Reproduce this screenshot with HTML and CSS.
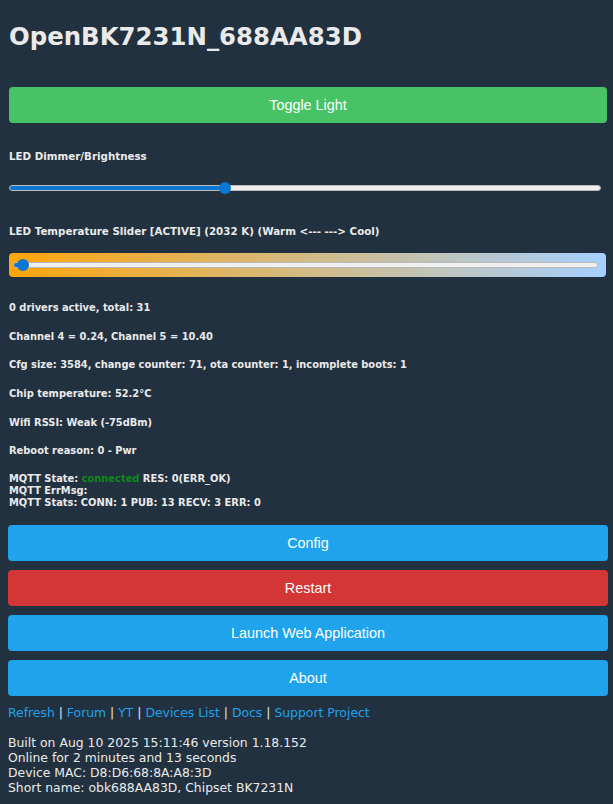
FILE: index.html
```html
<!DOCTYPE html>
<html>
<head>
<meta charset="utf-8">
<title>OpenBK7231N_688AA83D</title>
<link rel="stylesheet" href="styles.css">
</head>
<body>
<h1 class="title">OpenBK7231N_688AA83D</h1>
<button class="btn btn-green btn-inset">Toggle Light</button>

<div class="label label-dimmer">LED Dimmer/Brightness</div>
<input class="range range-dimmer" type="range" min="0" max="1000" value="362" style="--p: 37%">

<div class="label label-temp">LED Temperature Slider [ACTIVE] (2032 K) (Warm &lt;--- ---&gt; Cool)</div>
<div class="temp-box">
  <input class="range range-temp" type="range" min="0" max="1000" value="5" style="--p: 1.6%">
</div>

<div class="info">
  <div class="info-line first">0 drivers active, total: 31</div>
  <div class="info-line">Channel 4 = 0.24, Channel 5 = 10.40</div>
  <div class="info-line">Cfg size: 3584, change counter: 71, ota counter: 1, incomplete boots: 1</div>
  <div class="info-line">Chip temperature: 52.2°C</div>
  <div class="info-line">Wifi RSSI: Weak (-75dBm)</div>
  <div class="info-line">Reboot reason: 0 - Pwr</div>
  <div class="mqtt">
    <div>MQTT State: <span class="ok">connected</span> RES: 0(ERR_OK)</div>
    <div>MQTT ErrMsg: </div>
    <div>MQTT Stats: CONN: 1 PUB: 13 RECV: 3 ERR: 0</div>
  </div>
</div>

<div class="actions">
  <button class="btn btn-blue">Config</button>
  <button class="btn btn-red">Restart</button>
  <button class="btn btn-blue">Launch Web Application</button>
  <button class="btn btn-blue">About</button>
</div>

<div class="links">
  <a href="#">Refresh</a> | <a href="#">Forum</a> | <a href="#">YT</a> | <a href="#">Devices List</a> | <a href="#">Docs</a> | <a href="#">Support Project</a>
</div>

<div class="footer">
  <div>Built on Aug 10 2025 15:11:46 version 1.18.152</div>
  <div>Online for 2 minutes and 13 seconds</div>
  <div>Device MAC: D8:D6:68:8A:A8:3D</div>
  <div>Short name: obk688AA83D, Chipset BK7231N</div>
</div>
</body>
</html>
```
FILE: styles.css
```css
html, body {
  background: #22313f;
}
body {
  margin: 0;
  padding: 0 5px 0 8px;
  font-family: "DejaVu Sans", Verdana, sans-serif;
  color: #eaeaea;
}
.title {
  margin: 22px 0 0 1px;
  font-size: 24.4px;
  line-height: 30px;
  font-weight: bold;
  color: #eaeaea;
}
.btn {
  display: block;
  width: 100%;
  height: 36px;
  border: 0;
  border-radius: 4px;
  padding: 0;
  font-family: "Liberation Sans", Arial, sans-serif;
  font-size: 14.4px;
  line-height: 36px;
  color: #ffffff;
  text-align: center;
}
.btn-inset {
  width: calc(100% - 2px);
  margin-left: 1px;
}
.btn-green {
  background: #47c366;
  margin-top: 35px;
}
.btn-blue {
  background: #1fa3ec;
}
.btn-red {
  background: #d43535;
}
.label {
  font-size: 10.3px;
  font-weight: bold;
  line-height: 12px;
  padding-left: 1px;
}
.label-dimmer {
  margin-top: 27px;
}
.label-temp {
  margin-top: 31px;
}
.range {
  -webkit-appearance: none;
  appearance: none;
  display: block;
  margin: 0;
  padding: 0;
  height: 12px;
  background: transparent;
}
.range::-webkit-slider-runnable-track {
  height: 6px;
  border-radius: 3px;
  box-sizing: border-box;
  border: 1px solid #b9b9b9;
  background: linear-gradient(to right, #0b77d3 var(--p), #efefef var(--p));
}
.range::-webkit-slider-thumb {
  -webkit-appearance: none;
  appearance: none;
  width: 12px;
  height: 12px;
  margin-top: -4px;
  border-radius: 50%;
  background: #0b77d3;
  border: 0;
}
.range-dimmer {
  margin-top: 20px;
  margin-left: 1px;
  width: 592px;
}
.temp-box {
  margin: 16px 2px 0 1px;
  height: 24px;
  border-radius: 4px;
  background: linear-gradient(to right, #fea50c, #a6d0ff);
  box-sizing: border-box;
  padding: 6px 8px 0 4px;
}
.range-temp {
  width: 100%;
}
.info {
  font-size: 9.9px;
  font-weight: bold;
  line-height: 12px;
  padding-left: 1px;
}
.info-line {
  margin-top: 16.7px;
}
.info-line.first {
  margin-top: 25px;
}
.mqtt {
  margin-top: 16px;
}
.ok {
  color: #0c8a1a;
}
.actions {
  margin-top: 16px;
  display: flex;
  flex-direction: column;
  gap: 9px;
}
.actions .btn {
  margin: 0;
}
.links {
  margin-top: 9px;
  font-size: 12.4px;
  line-height: 15px;
  color: #eaeaea;
}
.links a {
  color: #1fa3ec;
  text-decoration: none;
}
.footer {
  margin-top: 15px;
  font-size: 12.4px;
  line-height: 15px;
  color: #eaeaea;
}
```
